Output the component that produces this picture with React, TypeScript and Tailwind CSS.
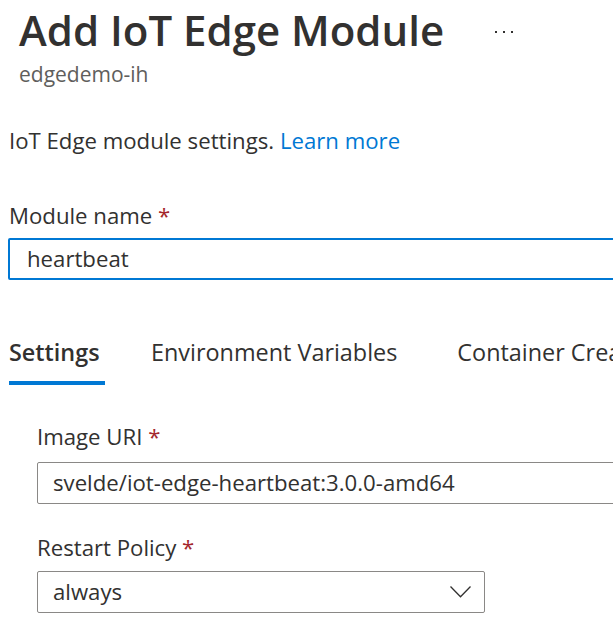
const FONT = "font-['Open_Sans','Noto_Sans',sans-serif]"

function Label({ text, className = '' }: { text: string; className?: string }) {
  return (
    <div className={`text-[22.2px] leading-[30px] text-[#323130] ${className}`}>
      {text} <span className="text-[#a4262c]">*</span>
    </div>
  )
}

export default function App() {
  return (
    <div className={`w-[613px] h-[629px] overflow-hidden bg-white ${FONT}`}>
      <div className="w-[780px]">
        {/* Header */}
        <div className="pl-[19px] pt-[4px]">
          <div className="flex items-center">
            <h1 className="text-[42px] leading-[52px] font-semibold text-[#323130]">Add IoT Edge Module</h1>
            <div className="ml-[51px] mt-[4px] flex gap-[6px]">
              <span className="w-[2px] h-[2px] bg-[#323130]" />
              <span className="w-[2px] h-[2px] bg-[#323130]" />
              <span className="w-[2px] h-[2px] bg-[#323130]" />
            </div>
          </div>
          <p className="mt-[4px] text-[21px] leading-[28px] text-[#605e5c]">edgedemo-ih</p>
        </div>

        <p className="mt-[38px] pl-[9px] text-[22.2px] leading-[30px] text-[#323130]">
          IoT Edge module settings. <a className="text-[#0078d4]">Learn more</a>
        </p>

        {/* Module name */}
        <div className="mt-[45px] pl-[8px]">
          <Label text="Module name" className="pl-[1px]" />
          <div className="mt-[7px] h-[42px] border-2 border-[#0078d4] rounded-[2px] flex items-center pl-[17px] text-[22.2px] text-[#323130]">
            heartbeat
          </div>
        </div>

        {/* Tabs */}
        <div className="mt-[55px] pl-[9px] flex items-start text-[23.4px] text-[#323130]">
          <div className="flex flex-col">
            <span className="leading-[34px] font-semibold">Settings</span>
            <span className="mt-[12px] h-[4px] w-[96px] bg-[#0078d4]" />
          </div>
          <span className="ml-[46px] leading-[34px]">Environment Variables</span>
          <span className="ml-[60px] leading-[34px] whitespace-nowrap">Container Create Options</span>
        </div>

        {/* Settings form */}
        <div className="pl-[37px] mt-[37px]">
          <Label text="Image URI" />
          <div className="mt-[10px] h-[42px] border border-[#8a8886] rounded-[2px] flex items-center pl-[15px] text-[22.2px] text-[#323130]">
            svelde/iot-edge-heartbeat:3.0.0-amd64
          </div>

          <Label text="Restart Policy" className="mt-[29px]" />
          <div className="mt-[8px] w-[448px] h-[42px] border border-[#8a8886] rounded-[2px] flex items-center justify-between pl-[15px] pr-[13px] text-[22.2px] text-[#323130]">
            <span>always</span>
            <svg width="21" height="12" viewBox="0 0 21 12" fill="none">
              <path d="M0.5 0.5 L10.5 10.8 L20.5 0.5" stroke="#323130" strokeWidth="1.3" />
            </svg>
          </div>
        </div>
      </div>
    </div>
  )
}
